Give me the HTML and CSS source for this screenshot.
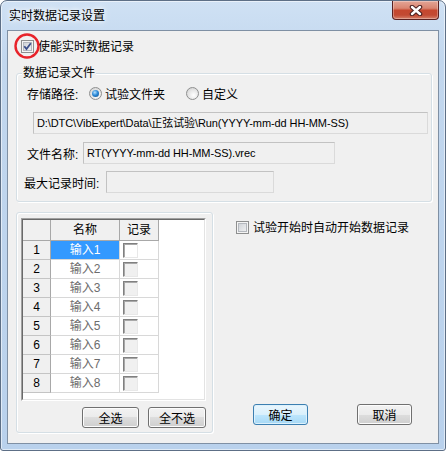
FILE: index.html
```html
<!DOCTYPE html>
<html lang="zh">
<head>
  <meta charset="UTF-8" />
  <title>实时数据记录设置</title>
  <link rel="stylesheet" href="styles.css">
</head>
<body>
  <div class="window">
    <div class="titlebar">
      <div class="title">实时数据记录设置</div>
      <button class="close-btn">
        <svg width="14" height="11" viewBox="0 0 14 11">
          <path d="M3 2 L11 9 M11 2 L3 9" stroke="#4a2020" stroke-width="4.5" stroke-linecap="round" />
          <path d="M3 2 L11 9 M11 2 L3 9" stroke="#ffffff" stroke-width="2.4" stroke-linecap="round" />
        </svg>
      </button>
    </div>

    <div class="client">
      <div class="enable-row">
        <span class="check">
          <svg width="11" height="11" viewBox="0 0 11 11">
            <path d="M2.3 5.2 L4.5 8 L8.8 2.3" fill="none" stroke="#3b4f8a" stroke-width="1.8" />
          </svg>
        </span>
        <span class="check-text">使能实时数据记录</span>
        <svg class="mark" width="26" height="26" viewBox="0 0 26 26">
          <circle cx="13" cy="13" r="11.5" fill="none" stroke="#e8232a" stroke-width="2.4" />
        </svg>
      </div>

      <div class="group file-group">
        <div class="group-title">数据记录文件</div>
        <div class="path-row">
          <span class="path-lbl">存储路径:</span>
          <span class="radio on"></span><span class="radio-text">试验文件夹</span>
          <span class="radio second"></span><span class="radio-text">自定义</span>
        </div>
        <div class="field path-field">D:\DTC\VibExpert\Data\正弦试验\Run(YYYY-mm-dd HH-MM-SS)</div>
        <div class="field-row">
          <span class="name-lbl">文件名称:</span>
          <div class="field name-field">RT(YYYY-mm-dd HH-MM-SS).vrec</div>
        </div>
        <div class="field-row max-row">
          <span class="max-lbl">最大记录时间:</span>
          <div class="field max-field"></div>
        </div>
      </div>

      <div class="bottom">
        <div class="group channel-group">
          <div class="grid">
            <div class="grid-inner">
              <table>
                <tr><th class="rh"></th><th class="name-col">名称</th><th class="rec-col">记录</th></tr>
                <tr><td class="rh">1</td><td class="name selected">输入1</td><td><span class="cell-check on"></span></td></tr>
                <tr><td class="rh">2</td><td class="name">输入2</td><td><span class="cell-check"></span></td></tr>
                <tr><td class="rh">3</td><td class="name">输入3</td><td><span class="cell-check"></span></td></tr>
                <tr><td class="rh">4</td><td class="name">输入4</td><td><span class="cell-check"></span></td></tr>
                <tr><td class="rh">5</td><td class="name">输入5</td><td><span class="cell-check"></span></td></tr>
                <tr><td class="rh">6</td><td class="name">输入6</td><td><span class="cell-check"></span></td></tr>
                <tr><td class="rh">7</td><td class="name">输入7</td><td><span class="cell-check"></span></td></tr>
                <tr><td class="rh">8</td><td class="name">输入8</td><td><span class="cell-check"></span></td></tr>
              </table>
            </div>
          </div>
          <div class="btn-row">
            <button class="btn select-all">全选</button>
            <button class="btn select-none">全不选</button>
          </div>
        </div>

        <div class="side">
          <div class="auto-row">
            <span class="check"></span>
            <span class="check-text">试验开始时自动开始数据记录</span>
          </div>
          <div class="dlg-buttons">
            <button class="btn default">确定</button>
            <button class="btn">取消</button>
          </div>
        </div>
      </div>
    </div>
  </div>
</body>
</html>
```

FILE: styles.css
```css
body {
  margin: 0;
  font-family: "Liberation Sans", "Noto Sans CJK SC", sans-serif;
  font-size: 12px;
  color: #000;
  background: #fff;
}

.window {
  width: 446px;
  height: 451px;
  box-sizing: border-box;
  border: 1px solid #5d6f86;
  border-radius: 7px 7px 3px 3px;
  background: linear-gradient(to bottom, #cfe1f4 0, #c2d7ee 60px, #b9d1ec 100%);
  box-shadow: inset 0 0 0 1px rgba(255, 255, 255, 0.55);
  padding: 0 6px 6px;
  display: flex;
  flex-direction: column;
}

/* title bar */
.titlebar {
  height: 29px;
  display: flex;
  justify-content: space-between;
  align-items: flex-start;
}

.title {
  margin: 8px 0 0 2px;
  line-height: 14px;
  text-shadow: 0 0 8px #fff, 0 0 4px #fff;
}

.close-btn {
  width: 47px;
  height: 19px;
  margin: 0;
  padding: 0;
  border: 1px solid #5a2121;
  border-top: none;
  border-radius: 0 0 4px 4px;
  background: linear-gradient(to bottom, #e3a596 0, #d98571 40%, #c5472f 52%, #c24a33 78%, #d6806a 100%);
  box-shadow: inset 0 0 0 1px rgba(255, 255, 255, 0.3);
  display: flex;
  align-items: center;
  justify-content: center;
}

/* client area */
.client {
  flex: 1;
  border: 1px solid #7f90a4;
  background: #f0f0f0;
}

.enable-row {
  position: relative;
  display: flex;
  align-items: center;
  height: 13px;
  margin: 9px 0 0 13px;
}

.check {
  width: 13px;
  height: 13px;
  box-sizing: border-box;
  border: 1px solid #8e8f8f;
  background: linear-gradient(135deg, #c9cdd3, #f6f6f6);
  box-shadow: inset 0 0 0 1px #f4f4f4, inset 0 0 0 2px #b4b8be;
  display: flex;
  flex-shrink: 0;
}

.check-text {
  margin-left: 4px;
  line-height: 14px;
  white-space: nowrap;
}

.mark {
  position: absolute;
  left: -7px;
  top: -7px;
}

/* group boxes */
.group {
  box-sizing: border-box;
  border: 1px solid #d5dfe5;
  border-radius: 3px;
  box-shadow: inset 1px 1px 0 #fff, 1px 1px 0 #fff;
}

.group-title {
  width: fit-content;
  margin: -8px 0 0 5px;
  padding: 0 1px;
  line-height: 14px;
  background: #f0f0f0;
}

.file-group {
  height: 129px;
  margin: 20px 6px 0 8px;
}

.path-row {
  display: flex;
  align-items: center;
  height: 16px;
  margin: 5px 0 0 10px;
  white-space: nowrap;
}

.path-lbl {
  width: 62px;
  flex-shrink: 0;
}

.radio {
  width: 13px;
  height: 13px;
  box-sizing: border-box;
  border: 1px solid #8e8f8f;
  border-radius: 50%;
  background: radial-gradient(circle at 60% 65%, #ffffff 0, #e4e4e4 55%, #c9c9c9 100%);
  display: flex;
  align-items: center;
  justify-content: center;
}

.radio.on::after {
  content: "";
  width: 7px;
  height: 7px;
  border-radius: 50%;
  background: radial-gradient(circle at 40% 35%, #b6e2ff 0, #2d8ad8 45%, #0d4a85 100%);
}

.radio.second {
  margin-left: 21px;
}

.radio-text {
  margin-left: 3px;
}

.field {
  box-sizing: border-box;
  height: 22px;
  line-height: 20px;
  padding-left: 3px;
  border: 1px solid;
  border-color: #c2c2c2 #dadada #dadada #c2c2c2;
  background: #f0f0f0;
  font-size: 11px;
  letter-spacing: -0.1px;
  white-space: nowrap;
  flex-shrink: 0;
}

.path-field {
  width: 395px;
  margin: 11px 0 0 16px;
}

.field-row {
  display: flex;
  align-items: center;
  margin-top: 8px;
  white-space: nowrap;
}

.name-lbl {
  box-sizing: border-box;
  width: 66px;
  padding-left: 10px;
  flex-shrink: 0;
}

.name-field {
  width: 252px;
}

.max-row {
  margin-top: 7px;
}

.max-lbl {
  box-sizing: border-box;
  width: 89px;
  padding-left: 7px;
  flex-shrink: 0;
}

.max-field {
  width: 168px;
}

/* lower part */
.bottom {
  display: flex;
  margin: 10px 0 0 8px;
}

.channel-group {
  width: 197px;
  height: 221px;
  flex-shrink: 0;
}

.grid {
  box-sizing: border-box;
  width: 185px;
  height: 183px;
  margin: 5px 0 0 4px;
  border: 1px solid;
  border-color: #a0a0a0 #ffffff #ffffff #a0a0a0;
}

.grid-inner {
  height: 100%;
  box-sizing: border-box;
  border: 1px solid;
  border-color: #696969 #e3e3e3 #e3e3e3 #696969;
  background: #fff;
}

table {
  border-collapse: separate;
  border-spacing: 0;
  table-layout: fixed;
  width: 136px;
}

th, td {
  padding: 0;
  height: 18px;
  line-height: 18px;
  text-align: center;
  font-weight: normal;
  border-right: 1px solid #d8d8d8;
  border-bottom: 1px solid #d8d8d8;
  vertical-align: top;
}

th {
  height: 20px;
  line-height: 20px;
  background: #f0f0f0;
  border-color: #a8a8a8;
}

.rh {
  width: 27px;
  background: #f0f0f0;
  border-right-color: #a8a8a8;
  border-bottom-color: #c4c4c4;
}

th.rh {
  border-bottom-color: #a8a8a8;
}

.name-col {
  width: 68px;
}

.rec-col {
  width: 38px;
}

.name {
  color: #6d6d6d;
}

.name.selected {
  background: #3399ff;
  color: #fff;
}

.cell-check {
  display: block;
  width: 15px;
  height: 15px;
  margin: 2px 0 0 3px;
  box-sizing: border-box;
  border: 1px solid;
  border-color: #808080 #e8e8e8 #e8e8e8 #808080;
  box-shadow: inset 1px 1px 0 #a8a8a8;
  background: #f0f0f0;
}

.cell-check.on {
  background: #fff;
}

.btn-row {
  display: flex;
  justify-content: flex-end;
  gap: 9px;
  margin: 6px 6px 0 0;
}

.btn {
  height: 21px;
  padding: 0;
  font: inherit;
  color: #000;
  border: 1px solid #707070;
  border-radius: 3px;
  background: linear-gradient(to bottom, #f2f2f2 0, #ebebeb 50%, #dddddd 50%, #cfcfcf 100%);
  box-shadow: inset 0 0 0 1px #fcfcfc;
}

.btn.default {
  border-color: #3c7fb1;
  background: linear-gradient(to bottom, #eaf6fd 0, #d9f0fc 50%, #bee6fd 50%, #a7d9f5 100%);
  box-shadow: inset 0 0 0 1px #ddf1fc;
}

.select-all {
  width: 57px;
}

.select-none {
  width: 58px;
}

.side {
  flex: 1;
  display: flex;
  flex-direction: column;
  padding: 9px 0 0 23px;
}

.auto-row {
  display: flex;
  align-items: center;
  height: 13px;
}

.dlg-buttons {
  display: flex;
  gap: 49px;
  margin: auto 0 8px 17px;
}

.dlg-buttons .btn {
  width: 55px;
}
```
